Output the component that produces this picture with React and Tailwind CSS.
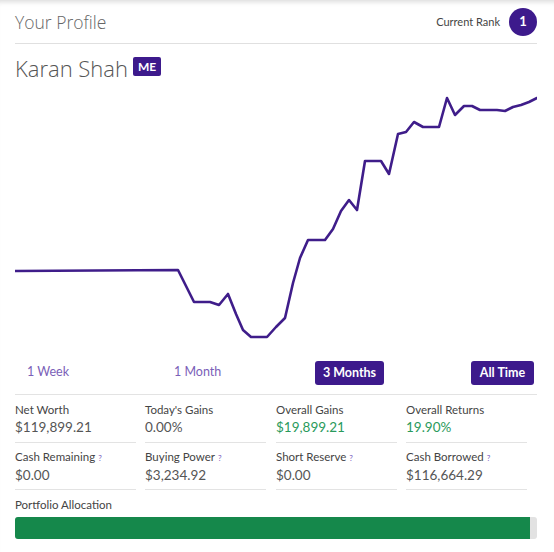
import React from 'react';

const POINTS = [
  [15, 271], [178, 270], [194, 302], [210, 302], [219, 305], [228, 294], [236, 314],
  [243, 330], [251, 337], [267, 337], [276, 327], [285, 318], [293, 283], [300, 258],
  [308, 240], [325, 240], [333, 229], [341, 211], [349, 200], [357, 210], [365, 161],
  [381, 161], [389, 174], [398, 134], [406, 132], [414, 122], [423, 127], [439, 127],
  [447, 98], [455, 115], [464, 106], [472, 106], [480, 110], [497, 110], [505, 111],
  [513, 107], [521, 105], [529, 102], [537, 98],
];

const CHART_TOP = 88;

const stats = [
  { label: 'Net Worth', value: '$119,899.21' },
  { label: "Today's Gains", value: '0.00%' },
  { label: 'Overall Gains', value: '$19,899.21', green: true },
  { label: 'Overall Returns', value: '19.90%', green: true },
  { label: 'Cash Remaining', value: '$0.00', help: true },
  { label: 'Buying Power', value: '$3,234.92', help: true },
  { label: 'Short Reserve', value: '$0.00', help: true },
  { label: 'Cash Borrowed', value: '$116,664.29', help: true },
];

const Stat = ({ label, value, green, help }) => (
  <div className="border-b border-[#e3e3e3] w-[121px] h-[47px] pt-[7px]">
    <div className="text-[11.5px] leading-[14px] text-[#444]">
      {label}
      {help && <span className="text-[8px] text-[#7a5cc0] ml-[3px]">?</span>}
    </div>
    <div className={`text-[13.5px] leading-[18px] mt-[1px] ${green ? 'text-[#2a9a5c]' : 'text-[#555]'}`}>{value}</div>
  </div>
);

export default function App() {
  const path = POINTS.map(([x, y], i) => `${i === 0 ? 'M' : 'L'}${x - 15} ${y - CHART_TOP}`).join(' ');

  return (
    <div
      className="w-[554px] h-[552px] bg-white overflow-hidden shadow-[inset_0_6px_5px_-4px_rgba(0,0,0,0.14)]"
      style={{ fontFamily: 'Lato, "Open Sans", sans-serif' }}
    >
      <div className="mx-[15px] w-[522px]">
        <div className="h-[44px] flex items-center justify-between border-b border-[#e0e0e0] pt-[1px]">
          <span className="text-[17.5px] text-[#666] font-light" style={{ fontFamily: '"Open Sans", sans-serif' }}>
            Your Profile
          </span>
          <div className="flex items-center gap-[9px]">
            <span className="text-[11px] text-[#444]">Current Rank</span>
            <span className="w-[28px] h-[28px] rounded-full bg-[#3d1a8c] text-white text-[13px] font-bold flex items-center justify-center">1</span>
          </div>
        </div>

        <div className="h-[44px] flex items-center gap-[5px] pt-[4px]">
          <span className="text-[22px] text-[#555] font-light" style={{ fontFamily: '"Open Sans", sans-serif' }}>
            Karan Shah
          </span>
          <span className="bg-[#3d1a8c] text-white text-[12px] font-bold leading-[13px] px-[5px] py-[3px] rounded-[2px] mt-[-3px]">ME</span>
        </div>

        <svg width="522" height="260" viewBox="0 0 522 260" className="block">
          <path d={path} fill="none" stroke="#3f1d8a" strokeWidth="2.6" strokeLinejoin="round" strokeLinecap="round" />
        </svg>

        <div className="h-[47px] grid grid-cols-[159px_141px_156px_66px] items-center border-b border-[#e3e3e3] pt-[2px]">
          <span className="pl-[12px] text-[12.5px] text-[#7b5fb8]">1 Week</span>
          <span className="text-[12.5px] text-[#7b5fb8]">1 Month</span>
          <div>
            <button className="w-[69px] h-[24px] rounded-[3px] bg-[#3d1a8c] text-white text-[12.5px] font-bold">3 Months</button>
          </div>
          <div>
            <button className="w-[63px] h-[24px] rounded-[3px] bg-[#3d1a8c] text-white text-[12.5px] font-bold">All Time</button>
          </div>
        </div>

        <div className="grid grid-cols-[130px_131px_130px_121px] pt-[1px]">
          {stats.map((s) => (
            <Stat key={s.label} {...s} />
          ))}
        </div>

        <div className="text-[11.5px] text-[#444] mt-[8px] leading-[14px]">Portfolio Allocation</div>
        <div className="mt-[5px] h-[22px] w-[522px] rounded-[3px] bg-[#e2e2e2] overflow-hidden">
          <div className="h-full bg-[#15884b]" style={{ width: '98.6%' }} />
        </div>
      </div>
    </div>
  );
}
